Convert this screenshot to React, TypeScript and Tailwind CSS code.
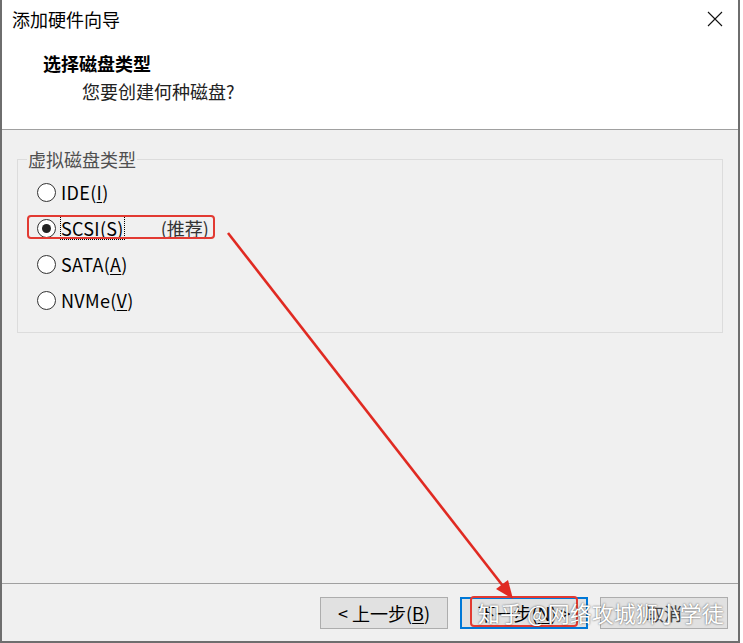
import React from "react";

const font = "font-['Noto_Sans_CJK_SC','Noto_Sans',sans-serif]";

function Radio({ checked }: { checked?: boolean }) {
  return (
    <span className="w-[19px] h-[19px] rounded-full border border-[#333] bg-white flex items-center justify-center shrink-0">
      {checked && <span className="w-[9px] h-[9px] rounded-full bg-[#222]" />}
    </span>
  );
}

function Row({
  label,
  u,
  rest,
  checked,
  children,
}: {
  label: string;
  u: string;
  rest: string;
  checked?: boolean;
  children?: React.ReactNode;
}) {
  return (
    <div className="relative h-[36px] flex items-center gap-[5px] pl-[19px]">
      <Radio checked={checked} />
      <span
        className={
          "text-[18px] leading-[22px] tracking-[0.3px] text-black " +
          (checked ? "outline outline-1 outline-dotted outline-black" : "")
        }
      >
        {label}
        <span className="underline underline-offset-2">{u}</span>
        {rest}
      </span>
      {children}
    </div>
  );
}

export default function App() {
  return (
    <div className={"relative w-[743px] h-[643px] bg-white overflow-hidden " + font}>
      <div className="w-[740px] h-[643px] flex flex-col border-l-2 border-r-2 border-b-2 border-[#6e6e6e]">
        {/* title bar */}
        <div className="h-[38px] flex items-center justify-between pl-[10px] pr-[15px] bg-white">
          <span className="text-[18px] leading-[24px] text-black">添加硬件向导</span>
          <svg width="16" height="16" viewBox="0 0 16 16">
            <path d="M1 1 L15 15 M15 1 L1 15" stroke="#111" strokeWidth="1.1" fill="none" />
          </svg>
        </div>
        {/* header */}
        <div className="h-[92px] bg-white border-b border-[#a0a0a0] pt-[13px] pl-[41px]">
          <div className="text-[18px] leading-[24px] font-bold text-black">选择磁盘类型</div>
          <div className="mt-[4px] ml-[39px] text-[18px] leading-[24px] text-[#222]">您要创建何种磁盘?</div>
        </div>
        {/* body */}
        <div className="flex-1 bg-[#f0f0f0] px-[15px] pt-[29px]">
          <div className="relative h-[174px] border border-[#dcdcdc] pt-[14px]">
            <span className="absolute left-[9px] top-[-13px] px-[1px] bg-[#f0f0f0] text-[18px] leading-[24px] text-[#505050]">
              虚拟磁盘类型
            </span>
            <Row label="IDE(" u="I" rest=")" />
            <Row label="SCSI(S)" u="" rest="" checked>
              <span className="ml-[32px] text-[18px] leading-[22px] text-[#333]">(推荐)</span>
              <span className="absolute left-[9px] top-[5px] w-[188px] h-[24px] border-2 border-[#e23a32] rounded-[4px]" />
            </Row>
            <Row label="SATA(" u="A" rest=")" />
            <Row label="NVMe(" u="V" rest=")" />
          </div>
        </div>
        {/* footer */}
        <div className="h-[58px] bg-[#f0f0f0] border-t border-[#a0a0a0] flex justify-end items-start pt-[13px] pr-[10px] gap-[12px]">
          <button className="w-[128px] h-[32px] bg-[#e1e1e1] border border-[#adadad] text-[18px] leading-[24px] text-black">
            &lt;&nbsp;上一步(<span className="underline underline-offset-2">B</span>)
          </button>
          <button className="w-[128px] h-[32px] bg-[#e1e1e1] border-2 border-[#0078d7] text-[18px] leading-[24px] text-black">
            下一步(<span className="underline underline-offset-2">N</span>)&nbsp;&gt;
          </button>
          <button className="w-[128px] h-[32px] bg-[#e1e1e1] border border-[#adadad] text-[18px] leading-[24px] text-[#444]">
            取消
          </button>
        </div>
      </div>

      {/* annotations */}
      <span className="absolute left-[470px] top-[596px] w-[108px] h-[31px] border-2 border-[#e23a32] rounded-[4px]" />
      <svg className="absolute inset-0 pointer-events-none" width="743" height="643">
        <line x1="228" y1="233" x2="503" y2="586" stroke="#e02a22" strokeWidth="2.6" />
        <polygon points="513,599 496,589 508,580" fill="#e02a22" />
      </svg>
      <span className="absolute left-[478px] top-[597px] text-[22px] leading-[30px] text-white whitespace-nowrap [text-shadow:0_0_2px_rgba(0,0,0,0.7)]">
        知乎 @网络攻城狮小学徒
      </span>
    </div>
  );
}
